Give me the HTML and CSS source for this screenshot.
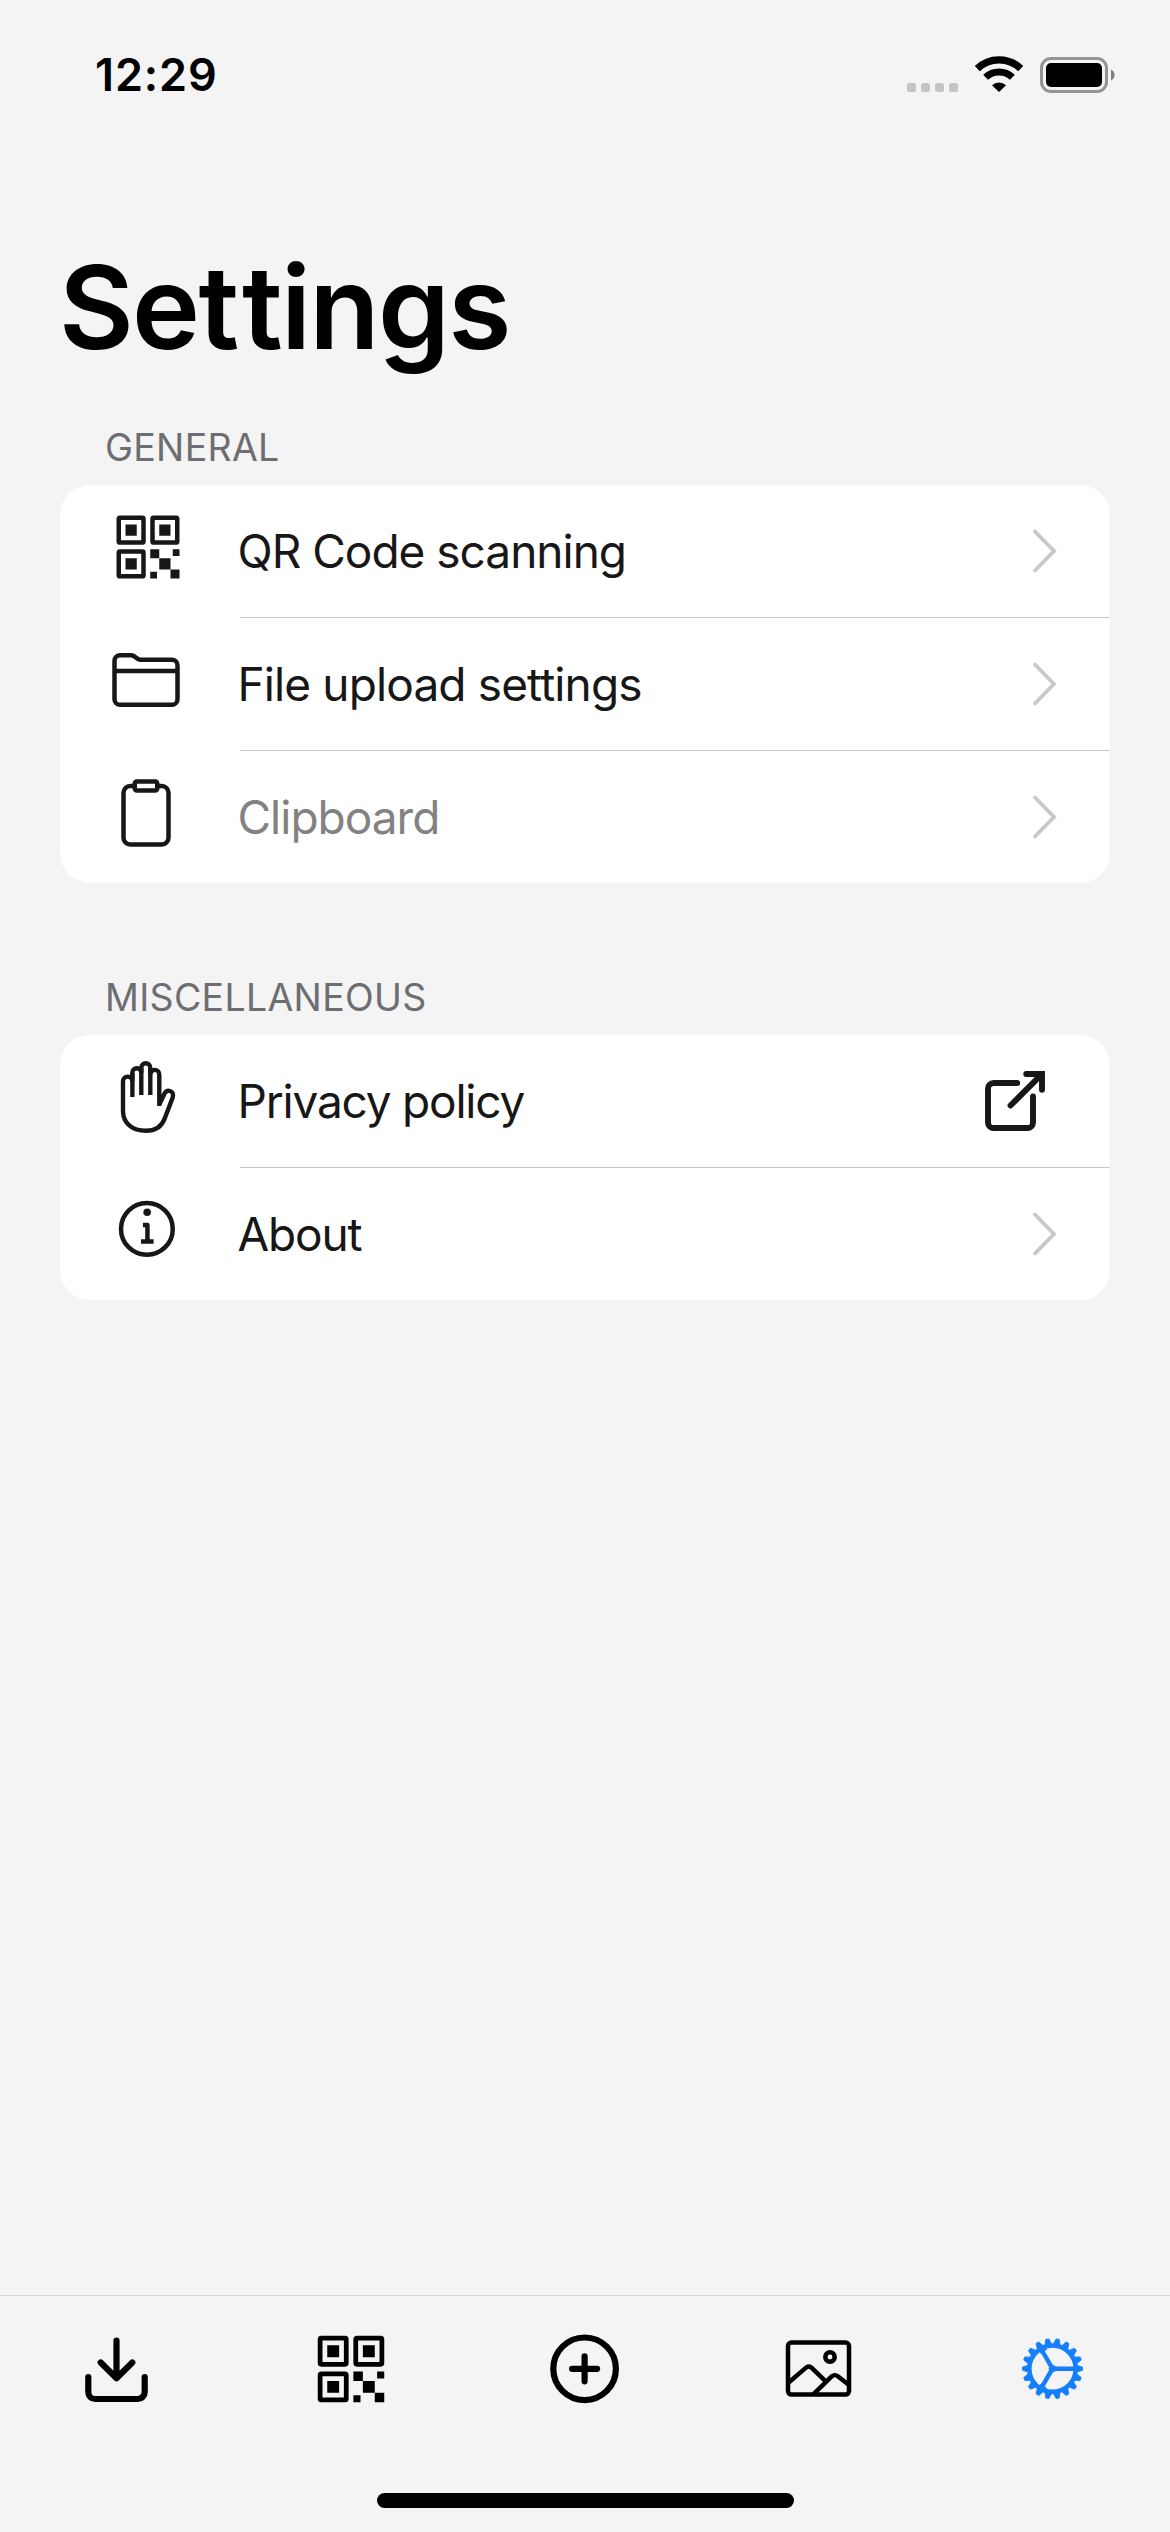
FILE: index.html
```html
<!DOCTYPE html>
<html lang="en">
<head>
<meta charset="utf-8">
<title>Settings</title>
<link rel="stylesheet" href="styles.css">
</head>
<body>
<svg class="defs" width="0" height="0" aria-hidden="true">
  <symbol id="qr" viewBox="0 0 512 512">
    <g fill="none" stroke="currentColor" stroke-width="32" stroke-linejoin="round">
      <rect x="48" y="48" width="176" height="176" rx="8"/>
      <rect x="288" y="48" width="176" height="176" rx="8"/>
      <rect x="48" y="288" width="176" height="176" rx="8"/>
    </g>
    <g fill="currentColor">
      <path d="M96 96h80v80H96zM336 96h80v80h-80zM96 336h80v80H96z"/>
      <path d="M336 336h80v80h-80zM272 272h64v64h-64zM416 416h64v64h-64zM432 272h48v48h-48zM272 432h48v48h-48z"/>
    </g>
  </symbol>
  <symbol id="chevron" viewBox="0 0 28 46">
    <path d="M4 3.500 23 23 4 42.500" fill="none" stroke="currentColor" stroke-width="3.800" stroke-linecap="round"/>
  </symbol>
</svg>

<header class="status">
  <time class="clock">12:29</time>
  <svg class="status-icons" width="212" height="40" viewBox="0 0 212 40">
    <g fill="#c4c4c4">
      <rect x="3" y="28" width="9" height="9" rx="2.500"/><rect x="17" y="28" width="9" height="9" rx="2.500"/>
      <rect x="31" y="28" width="9" height="9" rx="2.500"/><rect x="45" y="28" width="9" height="9" rx="2.500"/>
    </g>
    <g fill="none" stroke="#000">
      <path d="M73.300 13.600a31.300 31.300 0 0 1 43.400 0" stroke-width="7.300"/>
      <path d="M81.600 22.300a19.500 19.500 0 0 1 26.800 0" stroke-width="7"/>
    </g>
    <path d="M88 30.300a10.400 10.400 0 0 1 14 0L95 37z"/>
    <rect x="137.500" y="3.500" width="65" height="33" rx="9.500" fill="none" stroke="#949494" stroke-width="3"/>
    <rect x="142" y="8" width="56" height="24" rx="5"/>
    <path d="M207 14.500a6 6 0 0 1 0 11z" fill="#808080"/>
  </svg>
</header>

<main class="content">
  <h1 class="title">Se<span class="gap">t</span>tings</h1>

  <h2 class="group-label">GENERAL</h2>
  <ul class="group">
    <li class="row">
      <svg class="icon shifted"><use href="#qr"/></svg>
      <div class="cell"><span>QR Code scanning</span><svg class="chevron"><use href="#chevron"/></svg></div>
    </li>
    <li class="row">
      <svg class="icon" viewBox="0 0 512 512"><path class="line" d="M440 432H72a40 40 0 0 1-40-40V120a40 40 0 0 1 40-40h75.900a40 40 0 0 1 22.200 6.700l27.800 18.600a40 40 0 0 0 22.200 6.700H440a40 40 0 0 1 40 40v240a40 40 0 0 1-40 40zM32 192h448"/></svg>
      <div class="cell"><span class="loose">File upload settings</span><svg class="chevron"><use href="#chevron"/></svg></div>
    </li>
    <li class="row">
      <svg class="icon" viewBox="0 0 512 512"><path class="line" d="M336 64h32a48 48 0 0 1 48 48v320a48 48 0 0 1-48 48H144a48 48 0 0 1-48-48V112a48 48 0 0 1 48-48h32"/><rect class="line" x="176" y="32" width="160" height="64" rx="14"/></svg>
      <div class="cell"><span class="disabled">Clipboard</span><svg class="chevron"><use href="#chevron"/></svg></div>
    </li>
  </ul>

  <h2 class="group-label second">MISCELLANEOUS</h2>
  <ul class="group tight">
    <li class="row">
      <svg class="icon" viewBox="0 0 72 72"><g fill="none" stroke="currentColor" stroke-width="4.400"><path d="M49.300 45V14a4.500 4.800 0 0 0-9-.6V7a4.500 4.800 0 0 0-9 0v5a4.500 4.800 0 0 0-9 0v8.500a4.600 4.800 0 0 0-9.300 0V50C13 62 22 69.800 36 69.800c10.500 0 16-4.800 18.700-12.300l7.900-20.800c1.300-3.600-.2-6-2.600-6.700s-4.400.4-5.700 3l-5 10.500"/><path d="M22.400 36V12M31.300 34V7M40.300 34V7"/></g></svg>
      <div class="cell"><span>Privacy policy</span>
        <svg class="external" viewBox="0 0 512 512"><g fill="none" stroke="currentColor" stroke-width="42" stroke-linecap="round" stroke-linejoin="round"><path d="M384 224v184a40 40 0 0 1-40 40H104a40 40 0 0 1-40-40V168a40 40 0 0 1 40-40h167.500M224 288 440 72"/><path d="M336 64h112v112" stroke-linejoin="miter"/></g></svg>
      </div>
    </li>
    <li class="row">
      <svg class="icon shifted" viewBox="0 0 512 512"><circle class="line" cx="248" cy="248" r="184"/><path class="line" d="M220 220h32v116"/><path class="line" d="M206 338h90"/><circle cx="250" cy="130" r="27" fill="currentColor"/></svg>
      <div class="cell"><span>About</span><svg class="chevron"><use href="#chevron"/></svg></div>
    </li>
  </ul>
</main>

<footer class="footer">
  <nav class="tabs">
    <a class="tab"><svg viewBox="0 0 76 76"><path d="M37.500 9.500v37M21.700 31.500l15.800 15.700 15.800-15.700M9.300 46v15a7 7 0 0 0 7 7h42.400a7 7 0 0 0 7-7V46" fill="none" stroke="currentColor" stroke-width="6.200" stroke-linecap="round" stroke-linejoin="round"/></svg></a>
    <a class="tab"><svg><use href="#qr"/></svg></a>
    <a class="tab"><svg viewBox="0 0 76 76"><g fill="none" stroke="currentColor" stroke-width="6.200" stroke-linecap="round"><circle cx="37.600" cy="37.800" r="31.300"/><path d="M25.100 37.800h25M37.600 25.300v25"/></g></svg></a>
    <a class="tab"><svg viewBox="0 0 76 76"><g fill="none" stroke="currentColor" stroke-width="4.500" stroke-linejoin="round"><rect x="7" y="11.600" width="61" height="52" rx="3.500"/><circle cx="49" cy="26" r="4.700"/><path d="M8 51.200 25 36.600a4 4 0 0 1 5.500.1l14.200 13.700M32.500 63.200 50.700 45.400a4.600 4.600 0 0 1 6.100-.1L68 54"/></g></svg></a>
    <a class="tab active"><svg viewBox="0 0 76 76">
      <defs>
        <path id="tooth" d="M-3.200-25-1.600-30H1.600L3.200-25z" fill="currentColor" stroke="currentColor" stroke-width=".8" stroke-linejoin="round"/>
        <g id="teeth"><use href="#tooth"/><use href="#tooth" transform="rotate(20)"/><use href="#tooth" transform="rotate(40)"/></g>
      </defs>
      <g transform="translate(37.500 37.700)">
        <g fill="none" stroke="currentColor"><circle r="23.200" stroke-width="4.600"/><path d="M0 0h23M0 0l-11.700 20.200M0 0l-11.700-20.200" stroke-width="4.400"/></g>
        <path d="M4-2-2-5-4 0-2 5 4 2zM-5-19.500-12-15-15-21zM-5 19.500-12 15-15 21z" fill="currentColor"/>
        <use href="#teeth" transform="rotate(-10)"/><use href="#teeth" transform="rotate(50)"/><use href="#teeth" transform="rotate(110)"/>
        <use href="#teeth" transform="rotate(170)"/><use href="#teeth" transform="rotate(230)"/><use href="#teeth" transform="rotate(290)"/>
      </g></svg></a>
  </nav>
  <div class="home-indicator"></div>
</footer>
</body>
</html>
```
FILE: styles.css
```css
* { box-sizing: border-box; margin: 0; padding: 0; }

body {
  width: 1170px;
  height: 2532px;
  display: flex;
  flex-direction: column;
  background: #f4f4f4;
  color: #000;
  font-family: Inter, "Liberation Sans", sans-serif;
}

svg { display: block; flex: none; }
.defs { position: absolute; }

.status {
  height: 149px;
  padding: 0 54px 0 95px;
  display: flex;
  align-items: center;
  justify-content: space-between;
}
.clock { font-size: 45px; font-weight: 600; letter-spacing: 0.9px; }

.content { flex: 1; padding: 88px 60px 0; }

.title {
  height: 140px;
  margin-left: -1px;
  line-height: 142px;
  font-size: 115px;
  font-weight: 600;
  letter-spacing: -1.7px;
}
.title .gap { letter-spacing: 3px; }

.group-label {
  margin: 46px 0 12px;
  padding-left: 45px;
  line-height: 50px;
  font-size: 37.5px;
  font-weight: 400;
  letter-spacing: 0.3px;
  color: #6d6d72;
}
.group-label.second { margin-top: 90px; }

.group {
  list-style: none;
  overflow: hidden;
  border-radius: 30px;
  background: #fff;
  color: #171717;
}
.row { display: flex; height: 133px; padding-left: 50px; }
.row:last-child { height: 132px; }

.icon { width: 72px; height: 72px; margin: 26px 58px 0 0; }
.icon.shifted { margin-left: 2px; margin-right: 56px; }
.line { fill: none; stroke: currentColor; stroke-width: 32; stroke-linejoin: round; }

.cell {
  flex: 1;
  display: flex;
  align-items: center;
  justify-content: space-between;
  padding-right: 51px;
  border-bottom: 1px solid #c6c6c8;
  font-size: 46px;
  letter-spacing: -1px;
}
.cell span { margin-left: -2.5px; }
.row:last-child .cell { border-bottom: 0; }
.tight .cell { letter-spacing: -1.2px; }
.loose { letter-spacing: -0.87px; }
.disabled { color: #828282; }

.chevron { width: 28px; height: 46px; color: #c7c7cc; }
.external { width: 72px; height: 72px; margin-right: 8px; }

.footer {
  height: 237px;
  display: flex;
  flex-direction: column;
  align-items: center;
  justify-content: space-between;
  padding-bottom: 24px;
  border-top: 1px solid #d6d6d6;
}
.tabs { display: flex; width: 100%; padding-top: 35px; }
.tab { flex: 1; display: flex; justify-content: center; }
.tab svg { width: 76px; height: 76px; }
.tab.active { color: #147efb; }
.home-indicator { width: 417px; height: 15px; border-radius: 7.5px; background: #000; }
```
